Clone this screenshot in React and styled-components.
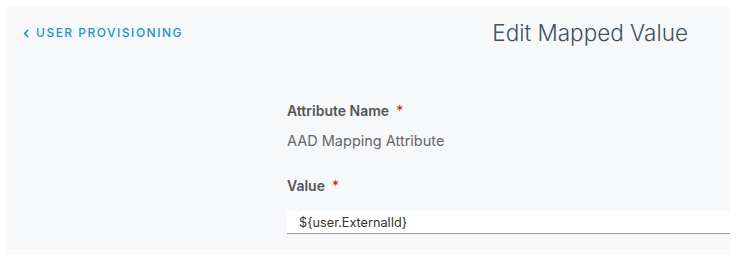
import styled, { createGlobalStyle } from 'styled-components';

const GlobalStyle = createGlobalStyle`
  html, body { margin: 0; padding: 0; background: #fff; }
  body { font-family: Inter, "Open Sans", sans-serif; }
`;

const Panel = styled.div`
  margin: 7px 0 0 6px;
  width: 724px;
  height: 247px;
  background: #f7f8fa;
  box-sizing: border-box;
`;

const Header = styled.div`
  display: flex;
  justify-content: space-between;
  align-items: center;
  height: 32px;
  padding: 10px 42px 0 17px;
`;

const BackLink = styled.a`
  display: flex;
  align-items: center;
  gap: 6px;
  color: #1a94d2;
  font-size: 12px;
  font-weight: 500;
  letter-spacing: 1.5px;
  text-decoration: none;
  line-height: 20px;
`;

const Title = styled.h1`
  margin: 0;
  font-size: 22.5px;
  font-weight: 300;
  color: #434f5a;
  line-height: 32px;
`;

const Form = styled.div`
  margin: 52px 0 0 281px;
  display: flex;
  flex-direction: column;
`;

const Label = styled.div`
  font-size: 14px;
  font-weight: 600;
  color: #565656;
  line-height: 20px;
  margin-top: ${p => p.$gap || 0}px;
`;

const Star = styled.span`
  color: #c92100;
  margin-left: 7px;
  font-weight: 400;
`;

const ValueText = styled.div`
  margin-top: 10px;
  font-size: 14.5px;
  color: #666;
  line-height: 20px;
`;

const Input = styled.input`
  margin-top: 15px;
  height: 23px;
  box-sizing: border-box;
  border: none;
  border-bottom: 1px solid #9a9a9a;
  background: #fff;
  padding: 0 12px;
  font-family: inherit;
  font-size: 12.7px;
  color: #333;
  outline: none;
`;

export default function App() {
  return (
    <>
      <GlobalStyle />
      <Panel>
        <Header>
          <BackLink href="#">
            <svg width="7" height="9" viewBox="0 0 7 9">
              <path d="M5 1 L1.8 4.5 L5 8" fill="none" stroke="#1a94d2" strokeWidth="1.8" />
            </svg>
            USER PROVISIONING
          </BackLink>
          <Title>Edit Mapped Value</Title>
        </Header>
        <Form>
          <Label>Attribute Name<Star>*</Star></Label>
          <ValueText>AAD Mapping Attribute</ValueText>
          <Label $gap={25}>Value<Star>*</Star></Label>
          <Input defaultValue="${user.ExternalId}" />
        </Form>
      </Panel>
    </>
  );
}
